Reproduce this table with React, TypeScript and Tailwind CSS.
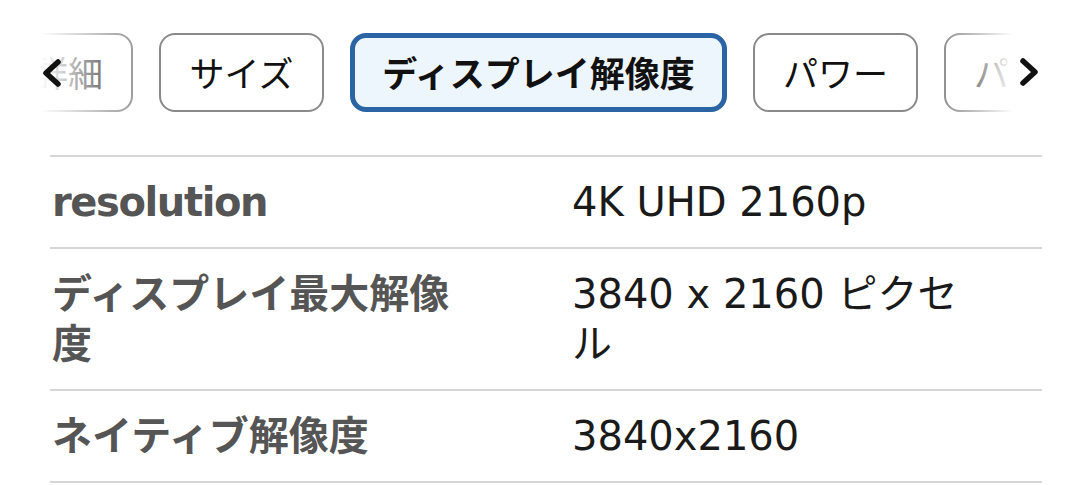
import React from "react";

const tabs = [
  { label: "詳細", active: false, w: "w-[130px]" },
  { label: "サイズ", active: false, w: "w-[165px]" },
  { label: "ディスプレイ解像度", active: true, w: "w-[377px]" },
  { label: "パワー", active: false, w: "w-[165px]" },
  { label: "パネル", active: false, w: "w-[165px]" },
];

const rows: { k: string; v: string; kc: string }[] = [
  { k: "resolution", v: "4K UHD 2160p", kc: "tracking-[-1.4px]" },
  { k: "ディスプレイ最大解像度", v: "3840 x 2160 ピクセル", kc: "" },
  { k: "ネイティブ解像度", v: "3840x2160", kc: "" },
];

function Chevron({ dir }: { dir: "left" | "right" }) {
  return (
    <svg width="22" height="30" viewBox="0 0 22 30" fill="none">
      {dir === "left" ? (
        <polyline points="17,4 5,15 17,26" stroke="#111" strokeWidth="5.5" strokeLinecap="round" strokeLinejoin="round" />
      ) : (
        <polyline points="5,4 17,15 5,26" stroke="#111" strokeWidth="5.5" strokeLinecap="round" strokeLinejoin="round" />
      )}
    </svg>
  );
}

export default function App() {
  return (
    <div className="w-[1080px] h-[485px] bg-white overflow-hidden relative font-['Noto_Sans_CJK_JP',sans-serif]">
      <div className="relative pt-[33px] h-[112px] overflow-hidden">
        <div className="flex gap-[26px] pl-[3px] whitespace-nowrap">
          {tabs.map((t) =>
            t.active ? (
              <div
                key={t.label}
                className={`${t.w} shrink-0 h-[79px] flex items-center justify-center border-[5px] border-[#2b64a4] rounded-[16px] bg-[#edf5fd] text-[35px] font-bold text-[#111]`}
              >
                {t.label}
              </div>
            ) : (
              <div
                key={t.label}
                className={`${t.w} shrink-0 h-[79px] flex items-center justify-center border-2 border-[#8a8a8a] rounded-[16px] bg-white text-[35px] text-[#111]`}
              >
                {t.label}
              </div>
            )
          )}
        </div>
        <div className="absolute left-0 top-0 bottom-0 w-[150px] bg-gradient-to-r from-white from-[27%] to-transparent flex items-center pl-[41px] pt-[33px]">
          <Chevron dir="left" />
        </div>
        <div className="absolute right-0 top-0 bottom-0 w-[140px] bg-gradient-to-l from-white from-[48%] to-transparent flex items-center justify-end pr-[40px] pt-[31px]">
          <Chevron dir="right" />
        </div>
      </div>

      <div className="mt-[43px] ml-[50px] w-[992px] border-b-2 border-[#d6d6d6]">
        {rows.map((r) => (
          <div key={r.k} className="flex border-t-2 border-[#d6d6d6] py-[20px] leading-[50px]">
            <div className={`w-[522px] shrink-0 pl-[2px] pr-[100px] text-[40px] font-semibold text-[#555] font-['DejaVu_Sans','Noto_Sans_CJK_JP',sans-serif] ${r.kc}`}>
              {r.k}
            </div>
            <div className="w-[400px] text-[40px] text-[#1a1a1a] font-['DejaVu_Sans','Noto_Sans_CJK_JP',sans-serif]">
              {r.v}
            </div>
          </div>
        ))}
      </div>
    </div>
  );
}
